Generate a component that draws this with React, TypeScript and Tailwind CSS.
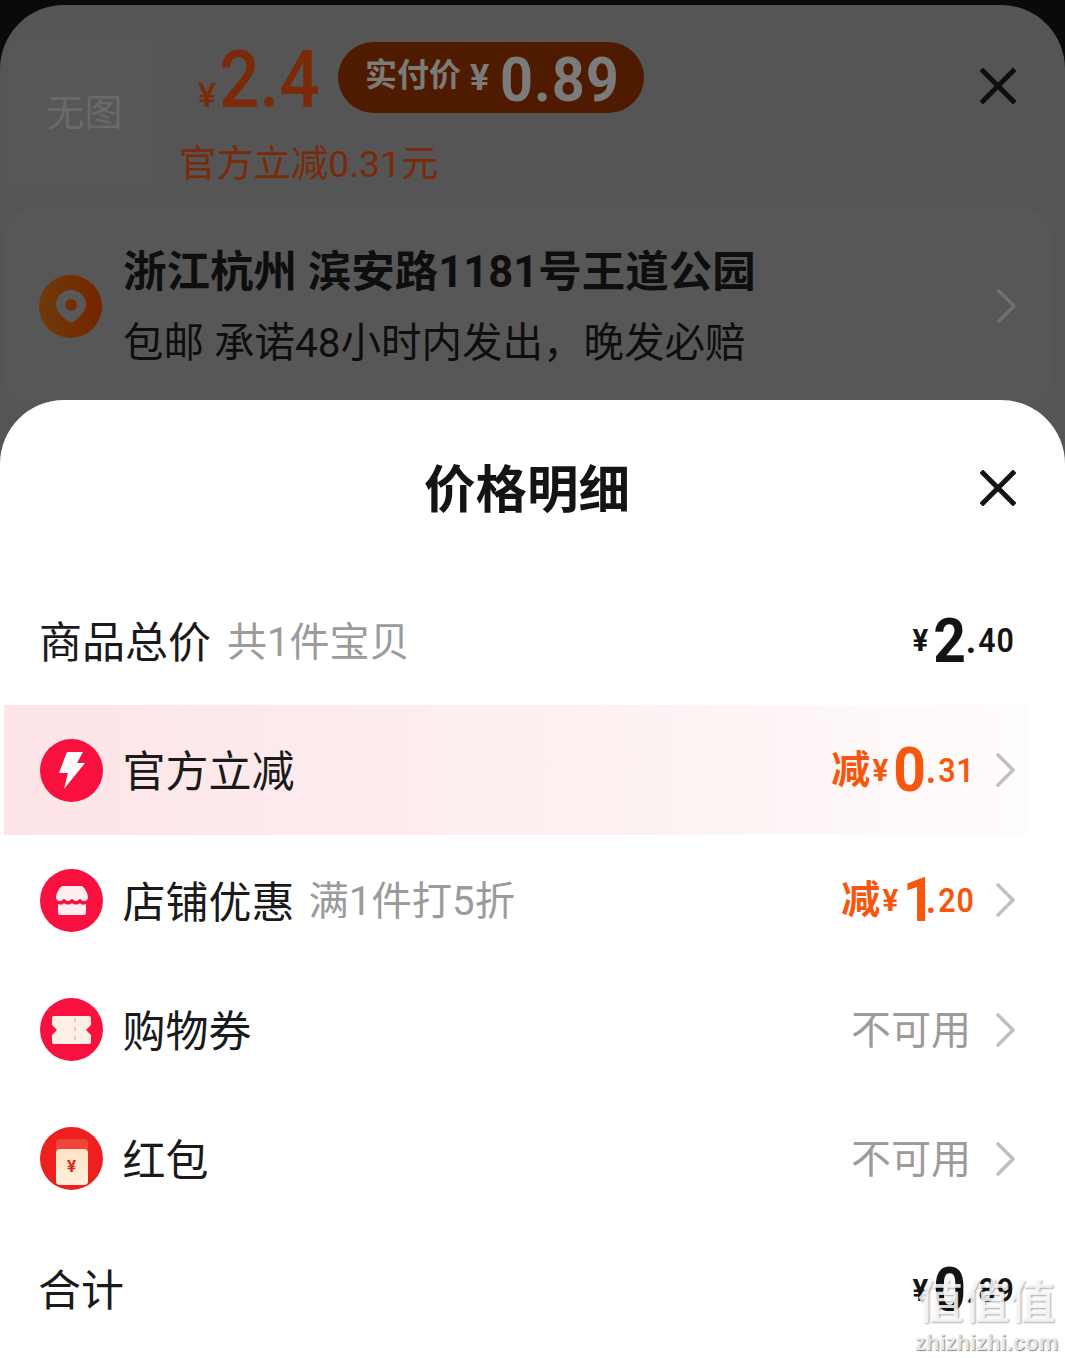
import React from "react";

const cjk = "font-['Roboto','Noto_Sans_CJK_SC',sans-serif]";

function Price({ whole, frac, color, prefix, wholeClass = "w-[31px]" }: { whole: string; frac: string; color: string; prefix?: string; wholeClass?: string }) {
  return (
    <div className={`flex items-center font-['Roboto','Noto_Sans_CJK_SC',sans-serif] ${color}`}>
      {prefix && <span className="text-[39px] leading-none font-bold mr-[2px]">{prefix}</span>}
      <span className="text-[31px] leading-none font-bold mr-[3px] scale-x-[0.95]">¥</span>
      <span className={`text-[62px] leading-none font-bold scale-x-[0.92] text-center ${wholeClass}`}>{whole}</span>
      <span className="text-[36px] leading-none font-bold ml-[3px] pt-[1px]">.</span>
      <span className="text-[33px] leading-none font-semibold tracking-[1px] scale-x-[0.92] origin-right -ml-[1px] -mr-[2px]">{frac}</span>
    </div>
  );
}

function Row({ icon, label, sub, right, highlight, height = "h-[130px]", labelPad = "pt-[4px]" }: { icon: React.ReactNode; label: string; sub?: string; right: React.ReactNode; highlight?: boolean; height?: string; labelPad?: string }) {
  return (
    <div className={`${height} ml-[4px] mr-[37px] pl-[36px] pr-[55px] flex items-center ${highlight ? "bg-gradient-to-r from-[#fde4e7] via-[#fdeff0] to-[#fffcfc]" : ""}`}>
      {icon}
      <span className={`ml-[19.5px] ${labelPad} text-[43px] leading-none text-[#1a1a1a]`}>{label}</span>
      {sub && <span className="ml-[14px] pt-[4px] text-[40.3px] leading-none text-[#9b9b9b]">{sub}</span>}
      <div className="ml-auto relative flex items-center">
        {right}
        <Chev />
      </div>
    </div>
  );
}

function Circle({ children, bg = "bg-[#f8103f]", className = "items-center" }: { children: React.ReactNode; bg?: string; className?: string }) {
  return <div className={`w-[63px] h-[63px] rounded-full ${bg} flex flex-col justify-center shrink-0 ${className}`}>{children}</div>;
}

function Chev() {
  return (
    <svg width="20" height="34" viewBox="0 0 20 34" className="absolute -right-[43px] top-1/2 -translate-y-1/2" fill="none">
      <path d="M2 2 L17 17 L2 32" stroke="#c0c0c0" strokeWidth="3.6" strokeLinecap="round" strokeLinejoin="round" />
    </svg>
  );
}

function Cross({ className }: { className: string }) {
  return (
    <svg width="36" height="36" viewBox="0 0 36 36" className={className} fill="none">
      <path d="M3 3 L33 33 M33 3 L3 33" stroke="currentColor" strokeWidth="5" strokeLinecap="square" />
    </svg>
  );
}

export default function App() {
  return (
    <div className={`relative w-[1065px] h-[1358px] overflow-hidden bg-[#0a0a0a] ${cjk}`}>
      {/* dimmed page behind */}
      <div className="mt-[5px] h-[600px] rounded-t-[64px] bg-[#555555] px-[4px]">
        <div className="flex pt-[35px] pl-[4px] h-[181px]">
          <div className="w-[146px] h-[146px] bg-[#575757] rounded-[8px] flex items-center justify-center text-[38px] text-[#6a6a6a] leading-none pl-[7px] shrink-0">无图</div>
          <div className="ml-[25px] relative">
            <div className="flex items-center">
              <div className="flex items-baseline text-[#7a2a08] ml-[19px] w-[140px] shrink-0 pt-[2px]">
                <span className="text-[34px] leading-none font-medium mr-[3px]">¥</span>
                <span className="text-[80px] leading-[76px] font-medium scale-x-[0.89] origin-left">2.4</span>
              </div>
              <div className="w-[306px] h-[71px] -mt-[4px] rounded-full bg-[#4f1b00] flex items-center pl-[27px] text-[#7b7b7b] font-bold shrink-0">
                <span className="text-[32px] leading-none -mt-[4px]">实付价</span>
                <span className="text-[36px] leading-none ml-[9px] pt-[2px]">¥</span>
                <span className="text-[62px] leading-none ml-[11px] tracking-[1px] scale-x-[0.93] origin-left pt-[5px]">0.89</span>
              </div>
            </div>
            <div className="mt-[24px] text-[37.3px] leading-[44px] text-[#7a2a08] whitespace-nowrap">官方立减0.31元</div>
          </div>
          <Cross className="ml-auto mr-[45px] mt-[28px] text-[#0e0e0e] shrink-0" />
        </div>
        <div className="mt-[21px] h-[200px] mr-[9px] rounded-[32px] bg-[#575757] flex items-center pl-[35px] pr-[35px]">
          <div className="w-[63px] h-[63px] rounded-full bg-gradient-to-r from-[#6e3a0a] to-[#762300] flex items-center justify-center shrink-0 -mt-[2px]">
            <svg width="32" height="34" viewBox="0 0 32 34">
              <path fillRule="evenodd" fill="#595959" d="M16 1C7.5 1 1 7.5 1 15.5c0 6 5 11 11.5 16.5 2 1.7 5 1.7 7 0C26 26.500 31 21.500 31 15.500 31 7.500 24.500 1 16 1Zm0 9a6 6 0 1 1 0 12 6 6 0 0 1 0-12Z" />
            </svg>
          </div>
          <div className="ml-[21px]">
            <div className="text-[43.5px] leading-[56px] font-bold text-[#0e0e0e] whitespace-nowrap">浙江杭州 滨安路1181号王道公园</div>
            <div className="mt-[16px] text-[40.5px] leading-[52px] text-[#0e0e0e] whitespace-nowrap">包邮 承诺48小时内发出，晚发必赔</div>
          </div>
          <div className="ml-auto w-[20px] h-[34px] -mt-[3px]">
            <svg width="20" height="34" viewBox="0 0 20 34" fill="none">
              <path d="M2 2 L17 17 L2 32" stroke="#707070" strokeWidth="3.6" strokeLinecap="round" strokeLinejoin="round" />
            </svg>
          </div>
        </div>
      </div>

      {/* price sheet */}
      <div className="absolute inset-x-0 top-[400px] bottom-0 bg-white rounded-t-[64px]">
        <div className="relative h-[176px] flex justify-center pt-[58px]">
          <h1 className="text-[51.500px] leading-[66px] font-bold text-[#141414] -ml-[11px]">价格明细</h1>
          <Cross className="absolute left-[980px] top-[70px] text-[#141414]" />
        </div>

        <div className="h-[129px] ml-[40px] mr-[52px] flex items-center">
          <span className="pt-[5px] -ml-[1px] text-[43px] leading-none text-[#1a1a1a]">商品总价</span>
          <span className="ml-[16px] pt-[5px] text-[40px] leading-none text-[#9b9b9b]">共1件宝贝</span>
          <div className="ml-auto"><Price whole="2" frac="40" color="text-[#141414]" /></div>
        </div>

        <Row highlight label="官方立减"
          icon={<Circle><svg width="27" height="37" viewBox="0 0 27 37"><path fill="#fff" d="M9 0h16l-6 11h8L6 37l4-16H1Z" /></svg></Circle>}
          right={<Price prefix="减" whole="0" frac="31" color="text-[#f7560f]" />} />
        <Row label="店铺优惠" sub="满1件打5折" labelPad="pt-[6px]"
          icon={<Circle><svg width="32" height="29" viewBox="0 0 32 29"><path fill="#ffeef0" d="M7 0h18c3 0 7 7 7 12 0 2-2 3-4 3-2.500 0-3-2-4-2s-2 2-4 2-3-2-4-2-2 2-4 2-3-2-4-2-2 2-4 2-4-1-4-3C0 7 4 0 7 0Z" /><path fill="#ffeef0" d="M2 18c2 1 5 1 6-1 2 2 6 2 8 0 2 2 6 2 8 0 1 2 4 2 6 1v9a2 2 0 0 1-2 2H4a2 2 0 0 1-2-2Z" /></svg></Circle>}
          right={<Price prefix="减" whole="1" frac="20" wholeClass="w-[21px]" color="text-[#f7560f]" />} />
        <Row label="购物券" height="h-[129px]" labelPad="pt-[5px]"
          icon={<Circle><svg width="41" height="28" viewBox="0 0 41 28"><path fill="#fdeee6" d="M3 0h35a2 2 0 0 1 2 2v7l-5 5 5 5v7a2 2 0 0 1-2 2H3a2 2 0 0 1-2-2v-7l5-5-5-5V2a2 2 0 0 1 2-2Z" /><path stroke="#f0c8c0" strokeWidth="2" strokeDasharray="4 5" d="M24 2v24" /></svg></Circle>}
          right={<span className="text-[40px] leading-none text-[#9b9b9b] pt-[2px] mr-[2px]">不可用</span>} />
        <Row label="红包" height="h-[129px]" labelPad="pt-[5px]"
          icon={
            <Circle bg="bg-[#ee1f1f]" className="items-center">
              <div className="w-[32px] h-[11px] rounded-t-[4px] bg-[#f0433a] mt-[6px]" />
              <div className="w-[32px] h-[36px] rounded-[4px] bg-gradient-to-b from-[#ffe2c4] to-[#fdf0da] flex items-center justify-center text-[17px] leading-none font-bold text-[#d8281f] -mt-[1px]">¥</div>
            </Circle>
          }
          right={<span className="text-[40px] leading-none text-[#9b9b9b] pt-[2px] mr-[2px]">不可用</span>} />

        <div className="h-[134px] ml-[38px] mr-[52px] flex items-center">
          <span className="pt-[2px] text-[43px] leading-none text-[#1a1a1a]">合计</span>
          <div className="ml-auto"><Price whole="0" frac="89" color="text-[#141414]" /></div>
        </div>
      </div>

      {/* watermark */}
      <div className="absolute left-[914px] top-[1274px] w-[145px] text-center select-none">
        <div className="text-[46px] leading-[56px] font-medium text-[rgba(255,255,255,0.85)] [text-shadow:1px_1px_2px_rgba(0,0,0,0.35)] whitespace-nowrap">值值值</div>
        <div className="text-[22px] leading-[26px] font-bold text-[rgba(235,235,235,0.95)] [text-shadow:1px_1px_1px_rgba(0,0,0,0.45)] font-['Liberation_Sans',sans-serif]">zhizhizhi.com</div>
      </div>
    </div>
  );
}
